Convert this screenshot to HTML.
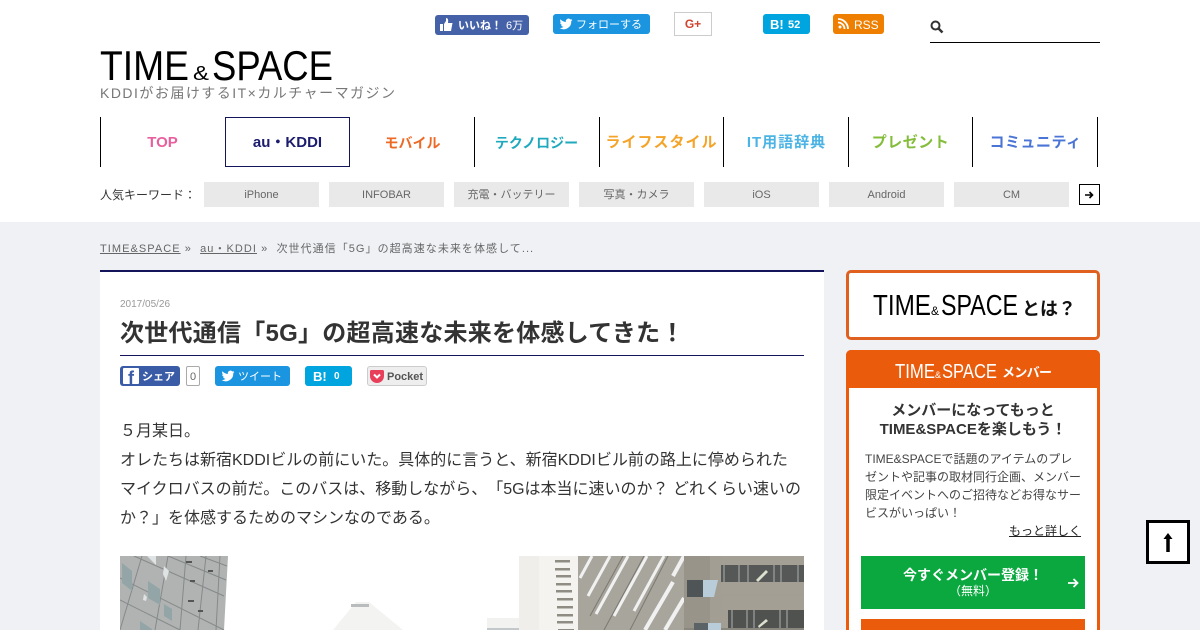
<!DOCTYPE html>
<html lang="ja"><head><meta charset="utf-8"><title>TIME&SPACE</title>
<style>
html,body{margin:0;padding:0;width:1200px;height:630px;overflow:hidden;background:#fff}
body{position:relative;font-family:"Liberation Sans","Noto Sans CJK JP",sans-serif;color:#333;text-spacing-trim:space-all;font-feature-settings:"chws" 0,"palt" 0}
.a{position:absolute;white-space:nowrap}
.btn{position:absolute;border-radius:3px;color:#fff;font-size:11px;line-height:22px;height:20px;white-space:nowrap;box-sizing:border-box}
.nv{position:absolute;top:117px;height:50px;width:125px;text-align:center;line-height:52px;font-size:15px;font-weight:bold;white-space:nowrap}
.sep{position:absolute;top:117px;width:1px;height:50px;background:#000}
.kw{position:absolute;top:182px;width:115px;height:25px;background:#e9e9e9;color:#666;font-size:11px;line-height:26px;text-align:center;white-space:nowrap}
</style></head><body>
<div class="btn" style="left:435px;top:15px;width:94px;background:#4561a8;font-size:11px"><svg style="position:absolute;left:5px;top:3px" width="13" height="13" viewBox="0 0 13 13"><path d="M0 6h3v7H0zM4 6l2-3V0c2 0 2.500 2 2 5h4.500l-1.500 8H4z" fill="#fff"/></svg><span class="a" style="left:23px;font-weight:bold">いいね！</span><span class="a" style="left:71px">6万</span></div>
<div class="btn" style="left:553px;top:14px;width:97px;background:#1b95e0"><svg style="position:absolute;left:6px;top:3px" width="14" height="14" viewBox="0 0 24 24"><path fill="#fff" d="M23 5c-.8.400-1.700.600-2.600.700.900-.600 1.600-1.400 2-2.500-.900.500-1.800.900-2.900 1.100A4.500 4.500 0 0 0 11.800 8.500C8 8.300 4.700 6.500 2.500 3.800c-1.200 2-.600 4.700 1.400 6-.700 0-1.400-.200-2-.600 0 2.200 1.500 4.100 3.600 4.500-.700.200-1.400.200-2 .100.600 1.800 2.200 3.100 4.200 3.100A9.100 9.100 0 0 1 1 18.800 12.900 12.900 0 0 0 21 7.300c.800-.600 1.500-1.400 2-2.300z"/></svg><span class="a" style="left:23px">フォローする</span></div>
<div class="a" style="left:674px;top:12px;width:36px;height:22px;border:1px solid #ccc;background:#fff;color:#d0432f;font-weight:bold;font-size:12px;line-height:23px;text-align:center">G+</div>
<div class="btn" style="left:763px;top:14px;width:47px;background:#00a4de;font-weight:bold"><span class="a" style="left:7px;font-size:13px">B!</span><span class="a" style="left:25px">52</span></div>
<div class="btn" style="left:833px;top:14px;width:51px;background:#ee7f00"><svg style="position:absolute;left:5px;top:4px" width="11" height="11" viewBox="0 0 11 11"><circle cx="2" cy="9" r="1.500" fill="#fff"/><path d="M0 4.500a6.500 6.500 0 0 1 6.500 6.500M0 1a10 10 0 0 1 10 10" stroke="#fff" stroke-width="1.800" fill="none"/></svg><span class="a" style="left:21px;font-size:12px">RSS</span></div>
<svg class="a" style="left:930px;top:20px" width="14" height="14" viewBox="0 0 14 14"><circle cx="5.500" cy="5.500" r="4" fill="none" stroke="#333" stroke-width="2"/><path d="M8.500 8.500l4 4" stroke="#333" stroke-width="2.500"/></svg>
<div class="a" style="left:930px;top:42px;width:170px;height:1px;background:#000"></div>

<svg class="a" style="left:100px;top:44px" width="300" height="60">
<text x="0" y="36" font-family="Liberation Sans" font-size="42" fill="#000" textLength="89" lengthAdjust="spacingAndGlyphs">TIME</text>
<text x="93" y="36" font-family="Liberation Sans" font-size="20" fill="#000" textLength="16" lengthAdjust="spacingAndGlyphs">&amp;</text>
<text x="112" y="36" font-family="Liberation Sans" font-size="42" fill="#000" textLength="121" lengthAdjust="spacingAndGlyphs">SPACE</text>
<text x="0" y="54" font-family="Liberation Sans,Noto Sans CJK JP,sans-serif" font-size="14" fill="#777" textLength="295">KDDIがお届けするIT×カルチャーマガジン</text>
</svg>

<div class="sep" style="left:100px"></div>
<div class="nv" style="left:100px;color:#e85f9e">TOP</div>
<div class="nv" style="left:225px;box-sizing:border-box;border:1px solid #14145a;line-height:50px;color:#1c1c6e">au・KDDI</div>
<div class="nv" style="left:350px;color:#ec6a25;font-size:14px">モバイル</div>
<div class="sep" style="left:474px"></div>
<div class="nv" style="left:474px;color:#1fa9bd;font-size:14px">テクノロジー</div>
<div class="sep" style="left:599px"></div>
<div class="nv" style="left:599px;color:#f5a42a;letter-spacing:1px">ライフスタイル</div>
<div class="sep" style="left:723px"></div>
<div class="nv" style="left:723px;color:#4cb4e4;letter-spacing:1px;padding-left:1px">IT用語辞典</div>
<div class="sep" style="left:848px"></div>
<div class="nv" style="left:848px;color:#84bd3a;letter-spacing:.5px">プレゼント</div>
<div class="sep" style="left:972px"></div>
<div class="nv" style="left:972px;color:#4a74d6;letter-spacing:.5px;padding-left:1px">コミュニティ</div>
<div class="sep" style="left:1097px"></div>

<div class="a" style="left:100px;top:187px;font-size:12px;line-height:16px;color:#333">人気キーワード：</div>
<div class="kw" style="left:204px">iPhone</div>
<div class="kw" style="left:329px">INFOBAR</div>
<div class="kw" style="left:454px">充電・バッテリー</div>
<div class="kw" style="left:579px">写真・カメラ</div>
<div class="kw" style="left:704px">iOS</div>
<div class="kw" style="left:829px">Android</div>
<div class="kw" style="left:954px">CM</div>
<div class="a" style="left:1079px;top:184px;width:19px;height:19px;border:1px solid #000;background:#fff"><svg style="position:absolute;left:5px;top:6px" width="9" height="8" viewBox="0 0 9 8"><path d="M0 4h7M4.500 1l3 3-3 3" stroke="#000" stroke-width="1.600" fill="none"/></svg></div>

<div class="a" style="left:0;top:222px;width:1200px;height:408px;background:#eff1f5"></div>
<div class="a" style="left:100px;top:242px;font-size:11px;line-height:14px;letter-spacing:1.050px;color:#666"><span style="text-decoration:underline">TIME&amp;SPACE</span> »&nbsp; <span style="text-decoration:underline">au・KDDI</span> »&nbsp; 次世代通信「5G」の超高速な未来を体感して...</div>

<div class="a" style="left:100px;top:270px;width:724px;height:360px;background:#fff;border-top:2px solid #14145a;box-sizing:border-box;overflow:hidden"></div>
<div class="a" style="left:120px;top:298px;font-size:10px;line-height:14px;color:#999">2017/05/26</div>
<div class="a" style="left:120px;top:318px;font-size:24px;line-height:32px;letter-spacing:.25px;font-weight:bold;color:#333">次世代通信「5G」の超高速な未来を体感してきた！</div>
<div class="a" style="left:120px;top:355px;width:684px;height:1px;background:#14145a"></div>

<div class="btn" style="left:120px;top:366px;width:60px;background:#3a5ba5;font-weight:bold"><span class="a" style="left:3px;top:2px;width:16px;height:16px;background:#fff;color:#3a5ba5;font-size:18px;line-height:20px;text-align:center;border-radius:1px">f</span><span class="a" style="left:22px">シェア</span></div>
<div class="a" style="left:186px;top:366px;width:12px;height:18px;border:1px solid #aaa;border-radius:2px;font-size:11px;line-height:20px;text-align:center;color:#666">0</div>
<div class="btn" style="left:215px;top:366px;width:75px;background:#1b95e0"><svg style="position:absolute;left:6px;top:3px" width="14" height="14" viewBox="0 0 24 24"><path fill="#fff" d="M23 5c-.8.400-1.700.600-2.600.700.900-.600 1.600-1.400 2-2.500-.900.500-1.800.900-2.900 1.100A4.500 4.500 0 0 0 11.800 8.500C8 8.300 4.700 6.500 2.500 3.800c-1.200 2-.600 4.700 1.400 6-.700 0-1.400-.200-2-.600 0 2.200 1.500 4.100 3.600 4.500-.700.200-1.400.200-2 .100.600 1.800 2.200 3.100 4.200 3.100A9.100 9.100 0 0 1 1 18.800 12.900 12.900 0 0 0 21 7.300c.800-.600 1.500-1.400 2-2.300z"/></svg><span class="a" style="left:23px">ツイート</span></div>
<div class="btn" style="left:305px;top:366px;width:47px;background:#00a4de;font-weight:bold"><span class="a" style="left:8px;font-size:13px">B!</span><span class="a" style="left:29px;font-size:10px">0</span></div>
<div class="a" style="left:367px;top:366px;width:58px;height:18px;border:1px solid #ccc;border-radius:3px;background:#eee"><svg style="position:absolute;left:2px;top:3px" width="14" height="13" viewBox="0 0 14 13"><path d="M1.500 0h11A1.500 1.500 0 0 1 14 1.500V6A7 7 0 0 1 0 6V1.500A1.500 1.500 0 0 1 1.500 0z" fill="#e8405a"/><path d="M4 4.500l3 3 3-3" stroke="#fff" stroke-width="2" fill="none"/></svg><span class="a" style="left:19px;font-size:11px;line-height:20px;font-weight:bold;color:#555">Pocket</span></div>

<div class="a" style="left:120px;top:417px;width:690px;font-size:16px;line-height:29px;color:#333;white-space:normal">５月某日。<br>オレたちは新宿KDDIビルの前にいた。具体的に言うと、新宿KDDIビル前の路上に停められた<br>マイクロバスの前だ。このバスは、移動しながら、「5Gは本当に速いのか？ どれくらい速いの<br>か？」を体感するためのマシンなのである。</div>

<svg class="a" style="left:120px;top:556px" width="684" height="74" viewBox="0 0 684 74">
<rect width="684" height="74" fill="#fff"/>
<path d="M0 0h108l-4 74H0z" fill="#b0b3b2"/>
<g stroke="#858989" stroke-width="1" fill="none"><path d="M0 22L104 74M0 44L60 74M14 0L104 40M48 0L106 24M80 0L107 10M22 0L0 74M48 0L35 74M66 0L60 74M86 0L78 74M100 0L96 74"/></g>
<g fill="#dfe3e3"><path d="M27 0h9v9zM44 10l5 5-3 10-3-7zM24 38l3 3-1 4-3-1z"/></g>
<g fill="#94a5a8"><path d="M2 7l10 8 0 20-10-8zM28 25l12 8 0 16-12-7zM44 48l8 5 0 12-8-5zM20 65l12 8v1H20z"/></g>
<g fill="#555"><rect x="66" y="5" width="6" height="2"/><rect x="70" y="24" width="5" height="2"/><rect x="68" y="44" width="6" height="2"/><rect x="78" y="54" width="5" height="2"/><rect x="88" y="14" width="5" height="2"/></g>
<path d="M213 74l23-28h13l34 28z" fill="#f3f3f2"/>
<rect x="231" y="48" width="18" height="3" fill="#b9bcbd"/>
<path d="M367 62h32v12h-32z" fill="#f2f2f1"/><path d="M367 72h32v2h-32z" fill="#c3c9cb"/>
<path d="M399 0h59v74h-59z" fill="#f4f3f0"/><path d="M399 0h20v74h-20z" fill="#efeeeb"/>
<g fill="#8f8c84"><rect x="435" y="4" width="15" height="2.500"/><rect x="435" y="12" width="15" height="2.500"/><rect x="436" y="19" width="15" height="2.500"/><rect x="436" y="27" width="15" height="2.500"/><rect x="436" y="34" width="16" height="2.500"/><rect x="437" y="42" width="16" height="2.500"/><rect x="437" y="50" width="16" height="2.500"/><rect x="437" y="58" width="16" height="2.500"/><rect x="437" y="65" width="16" height="2.500"/><rect x="438" y="73" width="16" height="1"/></g>
<path d="M458 0h106v74H458z" fill="#a8a59c"/>
<g stroke="#f0f1f0" stroke-width="3"><path d="M460 22L472 0M468 40L490 0M476 58L508 0M494 60L527 0M514 55L544 0"/></g>
<g stroke="#f0f1f0" stroke-width="4"><path d="M525 74L553 26M545 74L564 42M553 20L564 0"/></g>
<g stroke="#7c7972" stroke-width="1"><path d="M470 60L503 0M484 74L524 0M510 74L548 0"/></g>
<path d="M564 0h120v74H564z" fill="#a29e94"/>
<path d="M564 0h26v74h-26z" fill="#989489"/>
<path d="M601 0h83v9h-83zM601 26h83v12h-83zM603 40h81v14h-81z" fill="#a39f95"/>
<path d="M601 9h83v17h-83z" fill="#555856"/>
<g stroke="#8f9290" stroke-width="1.500"><path d="M604 9v17M619 9v17M628 9v17M654 9v17M661 9v17M678 9v17"/></g>
<path d="M638 26l10-10-2-2-10 10z" fill="#dbe0cf"/>
<path d="M608 54h76v18h-76z" fill="#4f524f"/>
<g stroke="#8f9290" stroke-width="1.500"><path d="M612 54v18M627 54v18M634 54v18M660 54v18M667 54v18"/></g>
<path d="M639 72l9-7-2-2-8 7z" fill="#dbe0cf"/>
<rect x="564" y="72" width="120" height="2" fill="#8a877e"/>
<path d="M567 24h16v17h-16z" fill="#4f5557"/><path d="M583 24h15l-4 17h-11z" fill="#b8cdd9"/>
<path d="M574 67h14v7h-14z" fill="#5b6366"/><path d="M588 67h13v7h-13z" fill="#b8cdd9"/>
</svg>

<div class="a" style="left:846px;top:270px;width:254px;height:70px;box-sizing:border-box;border:3px solid #e0611f;border-radius:5px;background:#fff"></div>
<svg class="a" style="left:873px;top:290px" width="205" height="32"><text x="0" y="25" font-family="Liberation Sans" font-size="29" fill="#000" textLength="58" lengthAdjust="spacingAndGlyphs">TIME</text><text x="58" y="25" font-family="Liberation Sans" font-size="12" fill="#000">&amp;</text><text x="68" y="25" font-family="Liberation Sans" font-size="29" fill="#000" textLength="77" lengthAdjust="spacingAndGlyphs">SPACE</text><text x="149" y="25" font-family="Liberation Sans,Noto Sans CJK JP,sans-serif" font-size="18" font-weight="bold" fill="#111" textLength="54">とは？</text></svg>

<div class="a" style="left:846px;top:350px;width:254px;height:280px;box-sizing:border-box;border:3px solid #ea5b0c;border-bottom:0;border-radius:5px 5px 0 0;background:#fff"></div>
<div class="a" style="left:846px;top:350px;width:254px;height:38px;background:#ea5b0c;border-radius:5px 5px 0 0"></div>
<svg class="a" style="left:895px;top:358px" width="160" height="26"><text x="0" y="20" font-family="Liberation Sans" font-size="20" fill="#fff" textLength="40" lengthAdjust="spacingAndGlyphs">TIME</text><text x="40" y="20" font-family="Liberation Sans" font-size="9" fill="#fff">&amp;</text><text x="47" y="20" font-family="Liberation Sans" font-size="20" fill="#fff" textLength="55" lengthAdjust="spacingAndGlyphs">SPACE</text><text x="107" y="19" font-family="Liberation Sans,Noto Sans CJK JP,sans-serif" font-size="13" font-weight="bold" fill="#fff" textLength="50">メンバー</text></svg>

<div class="a" style="left:849px;top:401px;width:248px;text-align:center;font-size:15px;line-height:19px;font-weight:bold;color:#333">メンバーになってもっと<br>TIME&amp;SPACEを楽しもう！</div>
<div class="a" style="left:865px;top:450px;width:220px;font-size:12px;line-height:18px;color:#444;white-space:normal">TIME&amp;SPACEで話題のアイテムのプレ<br>ゼントや記事の取材同行企画、メンバー<br>限定イベントへのご招待などお得なサー<br>ビスがいっぱい！</div>
<div class="a" style="left:1009px;top:523px;font-size:12px;line-height:16px;color:#222;text-decoration:underline">もっと詳しく</div>

<div class="a" style="left:861px;top:556px;width:224px;height:53px;background:#0aa83f;color:#fff;text-align:center">
<div style="position:absolute;left:0;width:224px;top:10px;font-size:14px;line-height:18px;font-weight:bold">今すぐメンバー登録！</div>
<div style="position:absolute;left:0;width:224px;top:27px;font-size:12px;line-height:16px">（無料）</div>
<svg style="position:absolute;left:207px;top:22px" width="11" height="10" viewBox="0 0 11 10"><path d="M0 5h9M5.500 1l4 4-4 4" stroke="#fff" stroke-width="1.800" fill="none"/></svg></div>
<div class="a" style="left:861px;top:619px;width:224px;height:11px;background:#ea5b0c"></div>

<div class="a" style="left:1146px;top:520px;width:38px;height:38px;border:3px solid #000;background:#fff"><svg style="position:absolute;left:13px;top:10px" width="12" height="19" viewBox="0 0 12 19"><path d="M6 19V3" stroke="#000" stroke-width="3.500"/><path d="M1.500 6L6 0l4.500 6z" fill="#000"/></svg></div>
</body></html>
